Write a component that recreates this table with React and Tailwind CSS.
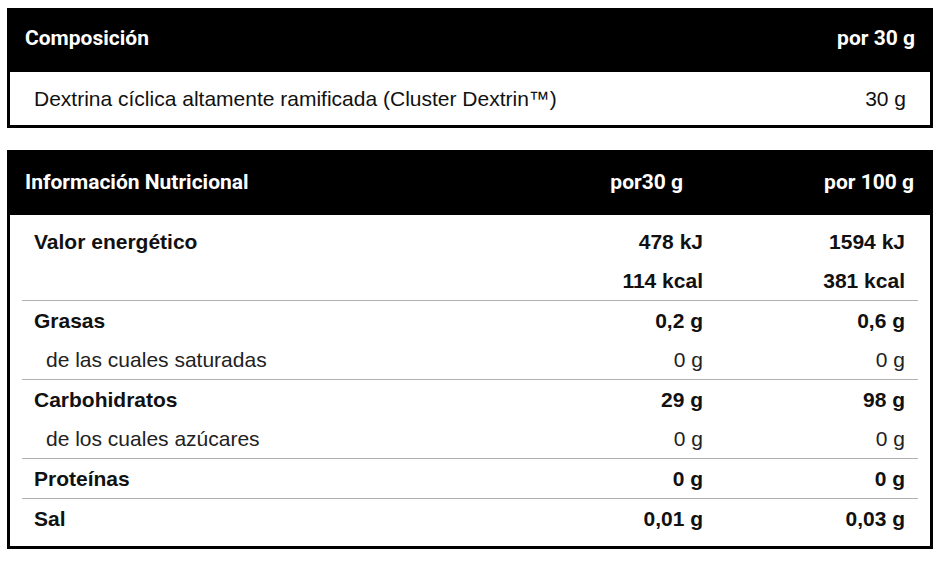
import React from "react";

const rows = [
  { label: "Valor energético", a: "478 kJ", b: "1594 kJ", bold: true },
  { label: "", a: "114 kcal", b: "381 kcal", bold: true, divider: true },
  { label: "Grasas", a: "0,2 g", b: "0,6 g", bold: true },
  { label: "de las cuales saturadas", a: "0 g", b: "0 g", sub: true, divider: true },
  { label: "Carbohidratos", a: "29 g", b: "98 g", bold: true },
  { label: "de los cuales azúcares", a: "0 g", b: "0 g", sub: true, divider: true },
  { label: "Proteínas", a: "0 g", b: "0 g", bold: true, divider: true },
  { label: "Sal", a: "0,01 g", b: "0,03 g", bold: true },
];

const head = "font-['Roboto',sans-serif] font-bold text-[21px] text-white";
const body = "font-['Liberation_Sans',Arial,sans-serif] text-[21px]";

export default function App() {
  return (
    <div className="bg-white w-[940px] h-[564px] pt-[8px] pl-[7px]">
      <div className="w-[926px] border-[3px] border-black">
        <div className={`bg-black h-[64px] -mt-[3px] -mx-[3px] pt-[3px] px-[18px] flex items-center justify-between pb-[6px] ${head}`}>
          <span>Composición</span>
          <span>por 30 g</span>
        </div>
        <div className={`h-[53px] flex items-center justify-between pl-[24px] pr-[24px] text-[#111] ${body}`}>
          <span>Dextrina cíclica altamente ramificada (Cluster Dextrin™)</span>
          <span>30 g</span>
        </div>
      </div>

      <div className="w-[926px] mt-[22px] border-[3px] border-black">
        <div className={`bg-black h-[62px] flex items-center pl-[15px] pr-[16px] pb-[3px] ${head}`}>
          <span className="flex-1">Información Nutricional</span>
          <span className="w-[200px] text-right pr-[15px]">por30 g</span>
          <span className="w-[216px] text-right">por 100 g</span>
        </div>
        <div className={`px-[12px] pt-[7px] pb-[8px] ${body}`}>
          {rows.map((r, i) => (
            <div key={i} className={r.divider ? "border-b border-[#b0b0b0]" : ""}>
              <div className={`h-[39px] flex items-center ${r.bold ? "font-bold text-[#111]" : "text-[#222]"}`}>
                <span className={`flex-1 ${r.sub ? "pl-[24px]" : "pl-[12px]"}`}>{r.label}</span>
                <span className="w-[200px] text-right pr-[12px]">{r.a}</span>
                <span className="w-[203px] text-right pr-[13px]">{r.b}</span>
              </div>
            </div>
          ))}
        </div>
      </div>
    </div>
  );
}
